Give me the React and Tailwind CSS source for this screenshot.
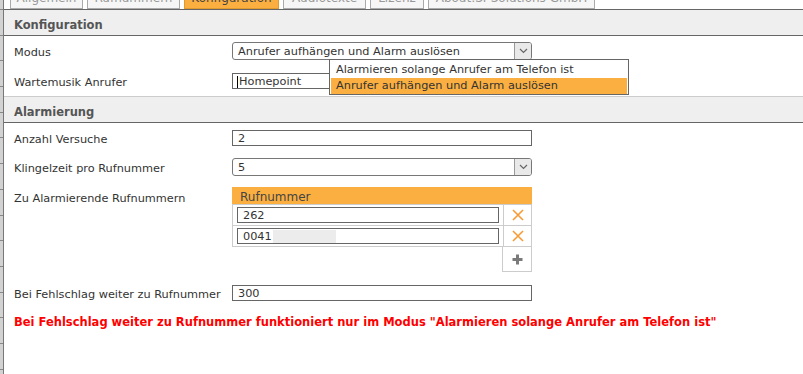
import React from 'react';

const tabs = [
  { label: 'Allgemein', w: 'w-[73px]' },
  { label: 'Rufnummern', w: 'w-[93px]' },
  { label: 'Konfiguration', w: 'w-[95px]', active: true },
  { label: 'Audiotexte', w: 'w-[83px]' },
  { label: 'Lizenz', w: 'w-[54px]' },
  { label: 'About:SI-Solutions GmbH', w: 'w-[167px]' },
];

function Chevron() {
  return (
    <svg width="9" height="6" viewBox="0 0 9 6" className="text-[#666]">
      <path d="M1 1 L4.5 4.5 L8 1" fill="none" stroke="currentColor" strokeWidth="1.2" />
    </svg>
  );
}

function Select({ value, children }) {
  return (
    <div className="relative flex h-[18px] w-[300px] items-center rounded-[3px] border border-[#777] bg-white">
      <span className="flex-1 pl-[5px] pt-[1px] leading-none">{value}</span>
      <span className="flex h-full w-[17px] items-center justify-center rounded-r-[2px] border-l border-[#999] bg-[#e9e9e9]">
        <Chevron />
      </span>
      {children}
    </div>
  );
}

function TextInput({ value, caret, className = 'w-[300px]' }) {
  return (
    <div className={`flex h-[16px] items-center border border-[#666] bg-white pl-[5px] pt-[1px] leading-none ${className}`}>
      {caret ? <span className="-ml-[1px] mr-[1px] h-[12px] w-px bg-black" /> : null}
      {value}
    </div>
  );
}

function Row({ label, children, className = 'h-[16px]' }) {
  return (
    <div className={`flex items-center ${className}`}>
      <div className="w-[218px] pt-[4px] leading-none">{label}</div>
      {children}
    </div>
  );
}

function SectionHeader({ title }) {
  return (
    <div className="flex h-[26px] shrink-0 items-center border-b border-[#666] bg-[#efefef] px-[10px] pt-[6px] text-[11.5px] font-bold leading-none text-[#555]">
      {title}
    </div>
  );
}

function RemoveIcon() {
  return (
    <svg width="12" height="12" viewBox="0 0 12 12">
      <path d="M1 1 L11 11 M11 1 L1 11" stroke="#f89b35" strokeWidth="1.6" fill="none" />
    </svg>
  );
}

function AddIcon() {
  return (
    <svg width="11" height="11" viewBox="0 0 11 11">
      <path d="M5.5 0.5 V10.5 M0.5 5.5 H10.5" stroke="#7a7a7a" strokeWidth="3" fill="none" />
    </svg>
  );
}

export default function App() {
  return (
    <div className="flex h-[374px] w-[803px] overflow-hidden bg-white font-['DejaVu_Sans',Verdana,sans-serif] text-[11.3px] text-[#333]">
      <div className="flex w-[4px] shrink-0 flex-col border-r border-[#777] bg-[#d2d2d2]">
        <div className="h-[10px] shrink-0 border-b border-[#888]" />
        {Array.from({ length: 14 }).map((_, i) => (
          <div key={i} className="h-[25.7px] shrink-0 border-b border-[#888]" />
        ))}
      </div>

      <div className="flex min-w-0 flex-1 flex-col">
        <div className="h-[10px] shrink-0 overflow-hidden border-b border-[#666]">
          <div className="-mt-[13px] ml-[6px] flex gap-[4px]">
            {tabs.map((t) => (
              <div
                key={t.label}
                className={`flex h-[22px] items-center justify-center border text-[12px] ${t.w} ${
                  t.active ? 'border-[#e09a30] bg-[#fbaf41] text-[#444]' : 'border-[#aaa] bg-[#f6f6f6] text-[#999]'
                }`}
              >
                {t.label}
              </div>
            ))}
          </div>
        </div>

        <SectionHeader title="Konfiguration" />

        <div className="flex shrink-0 flex-col border-b border-[#ccc] px-[10px] pb-[7px] pt-[6px]">
          <Row label="Modus" className="h-[18px]">
            <Select value="Anrufer aufhängen und Alarm auslösen">
              <div className="absolute left-[96px] top-[16px] z-10 flex h-[36px] w-[300px] flex-col border border-[#666] bg-white p-px">
                <div className="flex h-[17px] items-center pl-[5px] pt-[1px]">Alarmieren solange Anrufer am Telefon ist</div>
                <div className="flex h-[16px] items-center bg-[#fbaf41] pl-[5px] pt-[1px]">Anrufer aufhängen und Alarm auslösen</div>
              </div>
            </Select>
          </Row>
          <Row label="Wartemusik Anrufer" className="mt-[13px] h-[16px]">
            <TextInput value="Homepoint" caret />
          </Row>
        </div>

        <SectionHeader title="Alarmierung" />

        <div className="flex flex-col px-[10px] pt-[7px]">
          <Row label="Anzahl Versuche">
            <TextInput value="2" />
          </Row>
          <Row label="Klingelzeit pro Rufnummer" className="mt-[12px] h-[18px]">
            <Select value="5" />
          </Row>
          <div className="mt-[11px] flex items-start">
            <div className="w-[218px] pt-[6px] leading-none">Zu Alarmierende Rufnummern</div>
            <div className="flex w-[300px] flex-col">
              <div className="flex h-[18px] items-center border-b border-[#ccc] bg-[#fbaf41] pl-[8px] pt-[2px] text-[12px] leading-none text-[#444]">
                Rufnummer
              </div>
              <div className="flex h-[21px] border-b border-l border-[#ccc]">
                <div className="flex flex-1 items-center pl-[4px] pr-[4px]">
                  <TextInput value="262" className="w-full" />
                </div>
                <div className="flex w-[29px] items-center justify-center border-l border-r border-[#ccc]">
                  <RemoveIcon />
                </div>
              </div>
              <div className="flex h-[21px] border-b border-l border-[#ccc]">
                <div className="flex flex-1 items-center pl-[4px] pr-[4px]">
                  <TextInput
                    value={
                      <>
                        0041<span className="ml-px h-[13px] w-[63px] bg-[#ececec]" />
                      </>
                    }
                    className="w-full"
                  />
                </div>
                <div className="flex w-[29px] items-center justify-center border-l border-r border-[#ccc]">
                  <RemoveIcon />
                </div>
              </div>
              <div className="flex h-[25px] justify-end">
                <div className="flex w-[30px] items-center justify-center border-b border-l border-r border-[#ccc]">
                  <AddIcon />
                </div>
              </div>
            </div>
          </div>
          <Row label="Bei Fehlschlag weiter zu Rufnummer" className="mt-[13px] h-[16px]">
            <TextInput value="300" />
          </Row>
          <div className="mt-[13px] text-[11.5px] font-bold text-[#ff0000]">
            Bei Fehlschlag weiter zu Rufnummer funktioniert nur im Modus &quot;Alarmieren solange Anrufer am Telefon ist&quot;
          </div>
        </div>
      </div>
    </div>
  );
}
